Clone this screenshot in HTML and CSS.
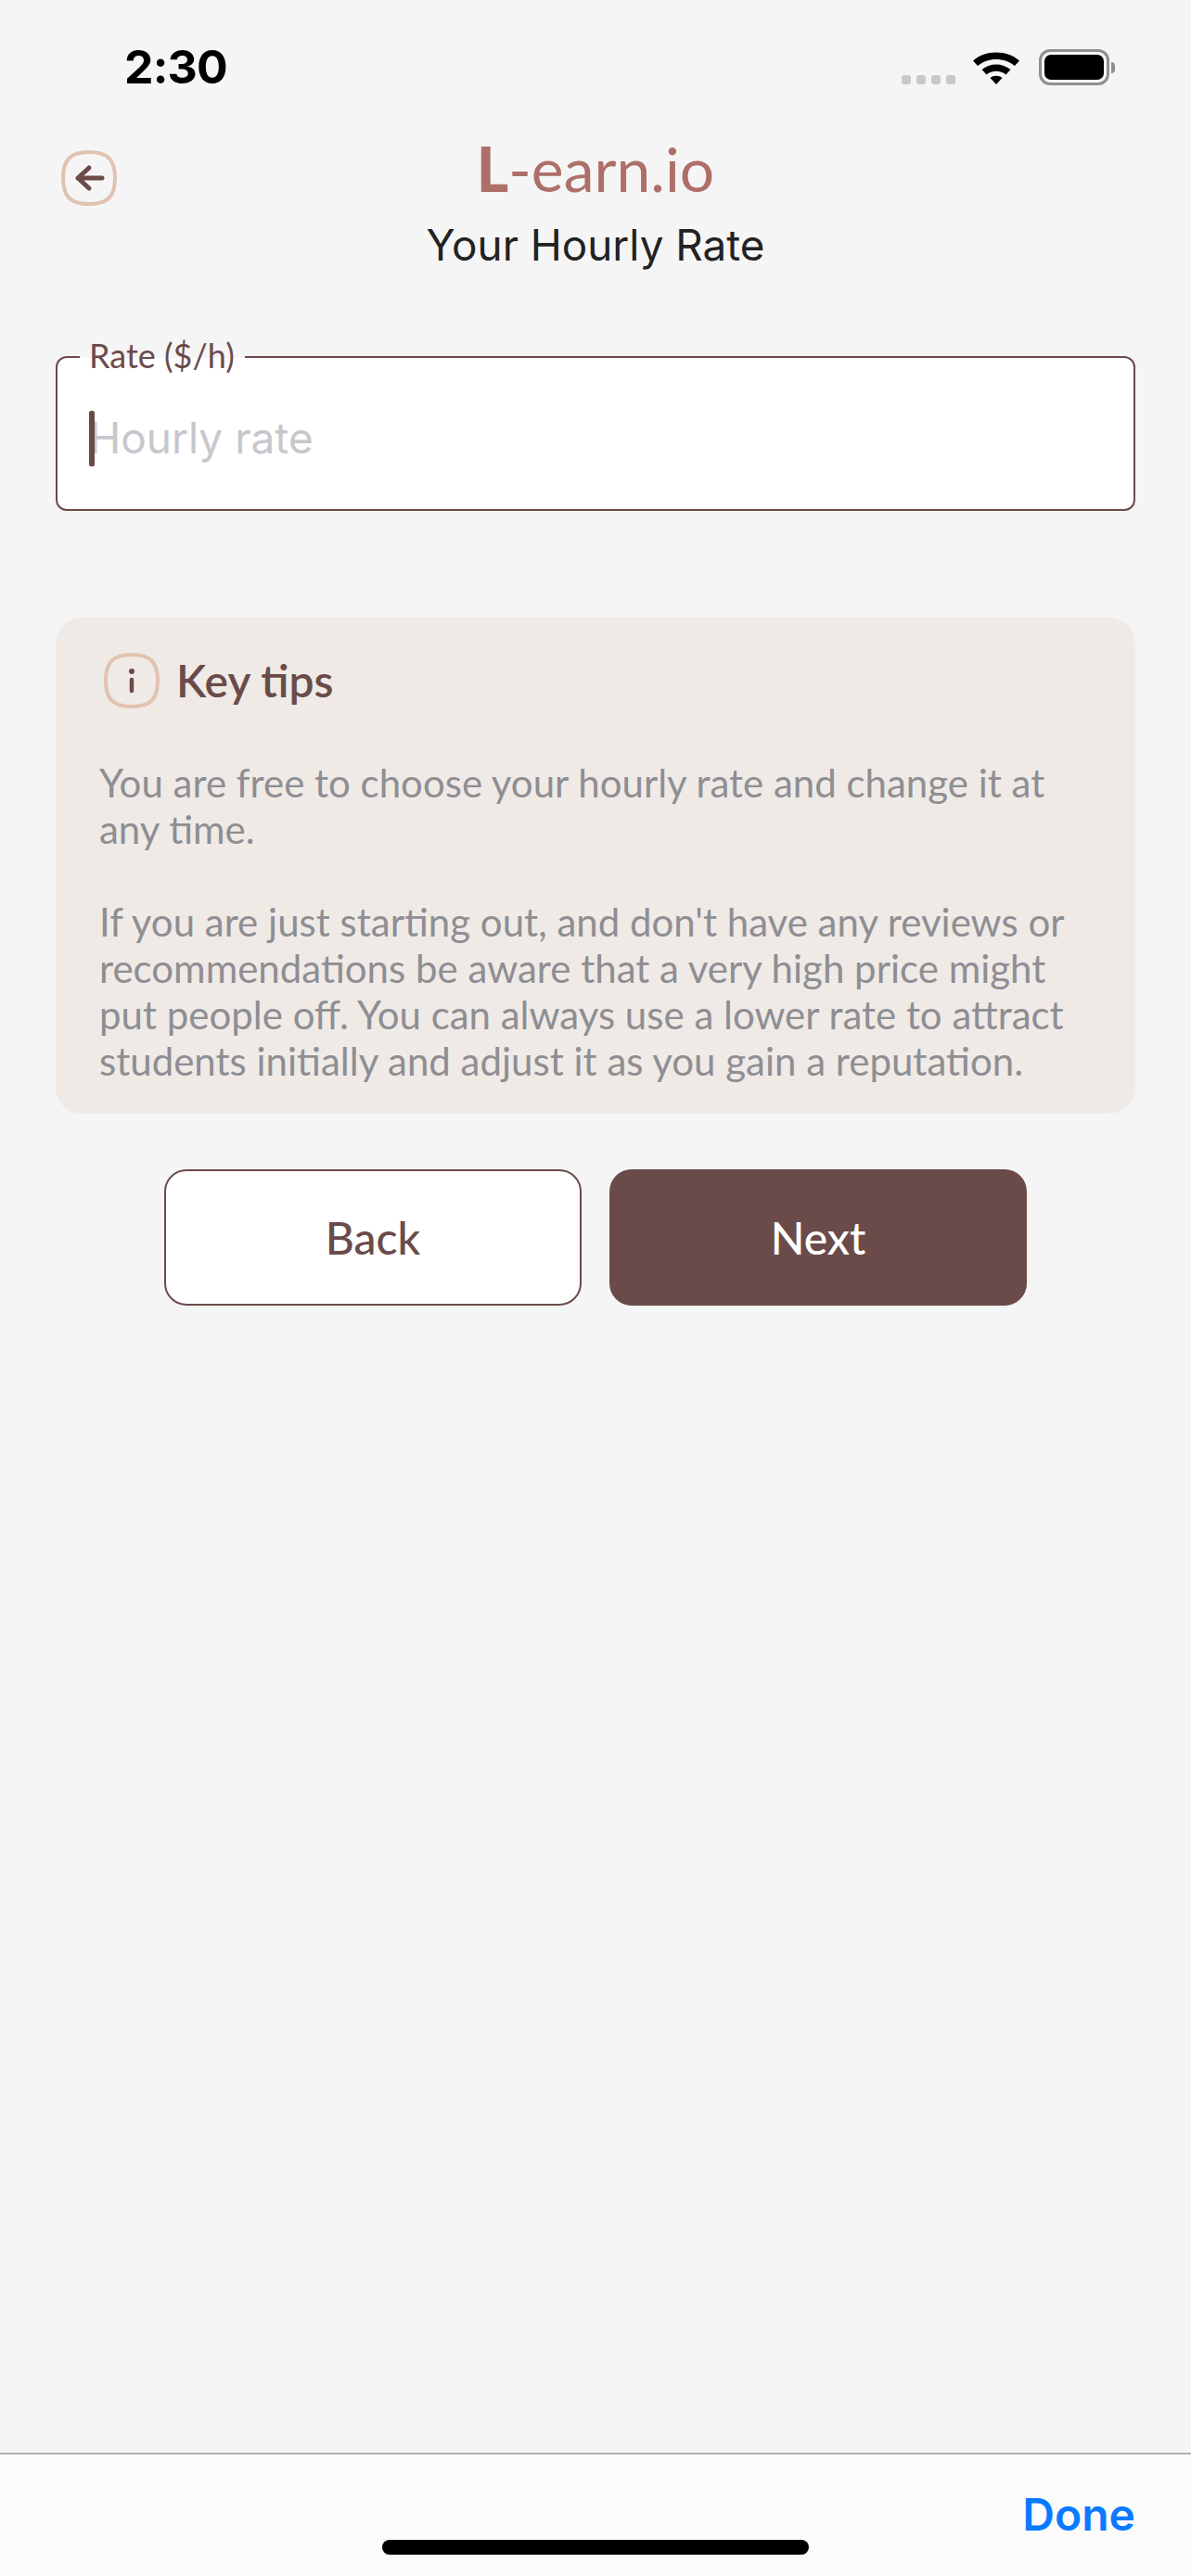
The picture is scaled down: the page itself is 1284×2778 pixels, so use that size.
FILE: index.html
```html
<!DOCTYPE html>
<html lang="en">
<head>
<meta charset="utf-8">
<title>Your Hourly Rate</title>
<link rel="stylesheet" href="styles.css">
</head>
<body>
<div class="screen">
  <div class="status">
    <span class="time">2:30</span>
    <div class="status-icons">
      <div class="signal"><i></i><i></i><i></i><i></i></div>
      <svg class="wifi" width="52" height="38" viewBox="0 0 52 38"><path d="M1 12.5C14 .5 38 .5 51 12.5L46 18C35 8.500 17 8.500 6 18Z" fill="#000"/><path d="M10.500 22C19 14.500 33 14.500 41.500 22L36.500 27.500C30.500 22.500 21.500 22.500 15.500 27.500Z" fill="#000"/><path d="M19.500 31C23 28 29 28 32.500 31L26 38Z" fill="#000"/></svg>
      <div class="battery"><div class="battery-body"><div class="battery-fill"></div></div><div class="battery-cap"></div></div>
    </div>
  </div>
  <header class="header">
    <svg class="back-icon" width="60" height="60" viewBox="0 0 60 60" fill="none"><path d="M30 2C50 2 58 10 58 30C58 50 50 58 30 58C10 58 2 50 2 30C2 10 10 2 30 2Z" stroke="#e0c3b0" stroke-width="4"/><path d="M44 30H18M30 19L18 30L30 41" stroke="#6b4b4a" stroke-width="5" stroke-linecap="round" stroke-linejoin="round"/></svg>
    <h1 class="logo"><b>L</b>-earn.io</h1>
    <h2 class="subtitle">Your Hourly Rate</h2>
  </header>
  <main class="content">
    <div class="field">
      <span class="field-label">Rate ($/h)</span>
      <span class="caret"></span><span class="placeholder">Hourly rate</span>
    </div>
    <section class="tips">
      <div class="tips-head">
        <svg width="60" height="60" viewBox="0 0 60 60" fill="none"><path d="M30 2C50 2 58 10 58 30C58 50 50 58 30 58C10 58 2 50 2 30C2 10 10 2 30 2Z" stroke="#e0c3b0" stroke-width="4"/><circle cx="30" cy="20" r="3" fill="#6b4b4a"/><path d="M30 29V41" stroke="#6b4b4a" stroke-width="4.500" stroke-linecap="round"/></svg>
        <h3 class="tips-title">Key tips</h3>
      </div>
      <p class="tips-text">You are free to choose your hourly rate and change it at any time.</p>
      <p class="tips-text">If you are just starting out, and don't have any reviews or recommendations be aware that a very high price might put people off. You can always use a lower rate to attract students initially and adjust it as you gain a reputation.</p>
    </section>
    <div class="actions">
      <button class="btn btn-back">Back</button>
      <button class="btn btn-next">Next</button>
    </div>
  </main>
  <footer class="keyboard-bar">
    <span class="done">Done</span>
    <div class="home"></div>
  </footer>
</div>
</body>
</html>
```

FILE: styles.css
```css
* { box-sizing: border-box; }
html, body { margin: 0; padding: 0; }
body { background: #f5f5f5; font-family: "Lato", sans-serif; }
.screen { width: 1284px; height: 2778px; display: flex; flex-direction: column; background: #f5f5f5; }
.status { height: 144px; flex: none; display: flex; justify-content: space-between; padding: 44px 82px 0 134px; }
.time { font: 700 50px/56px "Inter", sans-serif; color: #000; letter-spacing: -0.8px; }
.status-icons { display: flex; align-items: flex-start; padding-top: 9px; }
.signal { display: flex; gap: 6px; margin: 28px 18px 0 0; }
.signal i { width: 10px; height: 10px; border-radius: 3px; background: #c8c8c8; }
.wifi { margin-right: 20px; }
.battery { display: flex; align-items: center; }
.battery-body { width: 76px; height: 39px; border: 3px solid #8f8f8f; border-radius: 12px; padding: 3px; }
.battery-fill { width: 100%; height: 100%; background: #000; border-radius: 7px; }
.battery-cap { width: 4px; height: 12px; background: #8f8f8f; border-radius: 0 4px 4px 0; margin-left: 2px; }
.header { position: relative; height: 156px; flex: none; text-align: center; padding-top: 2px; }
.back-icon { position: absolute; left: 66px; top: 18px; }
.logo { margin: 0; font-weight: 400; font-size: 66px; line-height: 72px; color: #ae6f69; }
.logo b { font-weight: 900; }
.subtitle { margin: 19px 0 0; font: 400 45.800px/56px "Inter", sans-serif; color: #222; }
.content { flex: 1; padding: 0 60px; }
.field { position: relative; height: 167px; margin-top: 84px; background: #fff; border: 2px solid #6b4b4a; border-radius: 12px; padding: 58px 32px 0 34px; display: flex; align-items: flex-start; }
.field-label { position: absolute; left: 24px; top: -23px; padding: 0 11px 0 10px; height: 37px; font-size: 36px; line-height: 40px; color: #6b4b4a; background: linear-gradient(#f5f5f5 23px, #fff 23px); }
.caret { width: 6px; height: 60px; border-radius: 2px; background: #6b4b4a; flex: none; margin: -1px -6px 0 0; position: relative; }
.placeholder { font: 400 46px/56px "Inter", sans-serif; color: #c7c7cc; }
.tips { margin-top: 115px; height: 535px; background: #efeae6; border-radius: 28px; padding: 38px 47px 0; }
.tips-head { display: flex; align-items: center; gap: 18px; margin: 0 0 55px 5px; }
.tips-title { margin: 0; font-size: 48px; font-weight: 600; line-height: 60px; color: #6b4b4a; }
.tips-text { margin: 0 0 50px; font-size: 42px; line-height: 50px; color: #8e8e93; }
.actions { display: flex; justify-content: center; gap: 30px; margin-top: 60px; }
.btn { width: 450px; height: 147px; border-radius: 24px; font-family: "Lato", sans-serif; font-size: 48px; font-weight: 500; }
.btn-back { background: #fff; border: 2px solid #6b4b4a; color: #6b4b4a; }
.btn-next { background: #6b4b4a; border: none; color: #fff; }
.keyboard-bar { position: relative; height: 133px; flex: none; background: #fbfbfb; border-top: 2px solid #b2b2b2; }
.done { position: absolute; right: 60px; top: 37px; font: 600 48px/56px "Inter", sans-serif; color: #0a7aff; }
.home { position: absolute; left: 412px; top: 92px; width: 460px; height: 16px; border-radius: 8px; background: #000; }
```
